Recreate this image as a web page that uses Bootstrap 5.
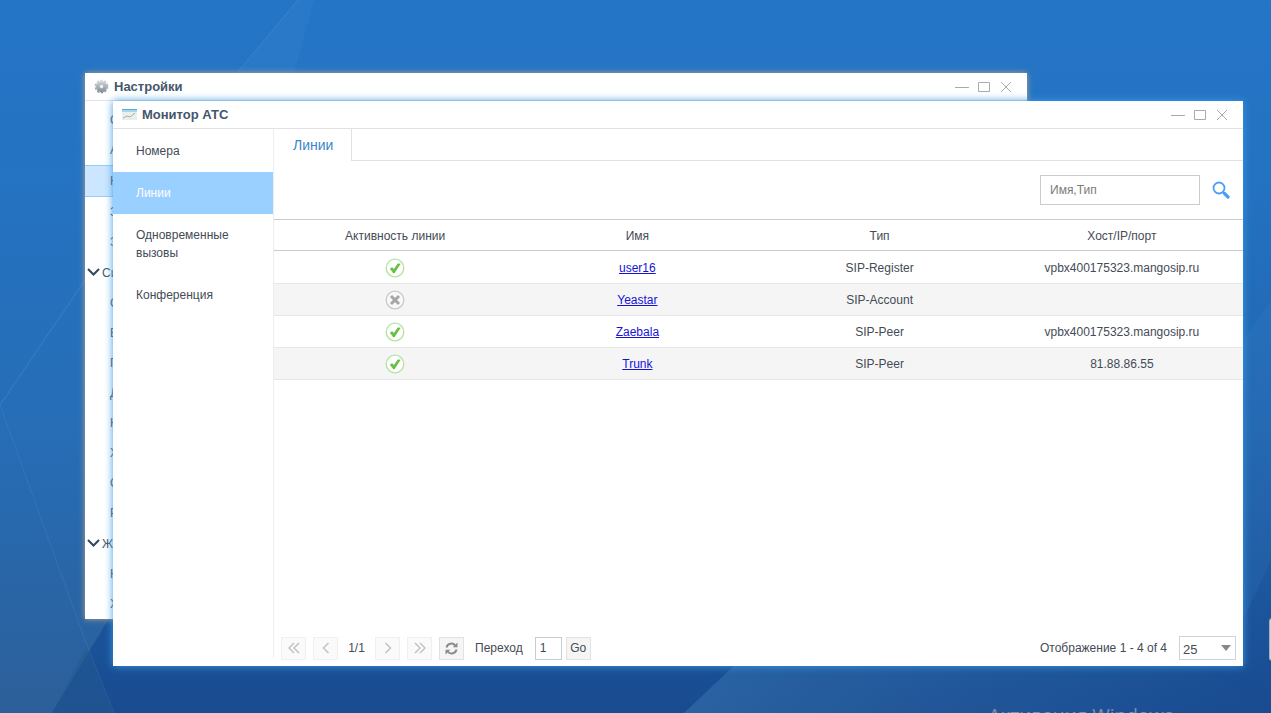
<!DOCTYPE html>
<html lang="ru">
<head>
<meta charset="utf-8">
<meta name="viewport" content="width=device-width, initial-scale=1">
<title>Монитор АТС</title>
<link href="https://cdn.jsdelivr.net/npm/bootstrap@5.3.0/dist/css/bootstrap.min.css" rel="stylesheet">
<style>
  body { font-family: "Liberation Sans", Arial, sans-serif; font-size: 12px; line-height: 18px; color: #444b55; }
  .desktop { background: linear-gradient(180deg, #2575c6 0%, #2472c2 25%, #2065b0 60%, #194b90 100%); }
  .wallpaper { z-index: 0; }
  .app-window { background: #fff; }
  .settings-window { inset: 73px 244px 94px 85px; z-index: 1; box-shadow: 0 0 6px #b3a58c; }
  .monitor-window { inset: 101px 28px 47px 113px; z-index: 2; box-shadow: 0 0 8px #3c9be4; }
  .title-bar { height: 28px; border-bottom: 1px solid #dfe3e6; padding: 0 10px 0 9px; color: #44566b; flex: none; }
  .title-bar h1 { font-size: 13px; line-height: 18px; font-weight: 700; }
  .title-bar > svg { margin-right: 5px; }
  .win-btn { width: 22px; height: 22px; background: none; border: 0; padding: 0; color: #aaa; }
  .win-btn svg, .pager svg, .status-icon, .search-btn svg { display: block; margin: auto; }

  .tree-list a { display: flex; align-items: center; height: 30px; padding-left: 25px; color: #44566b; text-decoration: none; }
  .tree-list a.chosen { height: 32px; background: #cce6ff; border: 1px solid #99cdf5; border-left: 0; }
  .tree-list a.group-head { height: 31px; padding-left: 2px; gap: 2px; }

  .side-menu { width: 161px; flex: none; border-right: 1px solid #eceef0; padding-top: 1px; }
  .side-menu a { padding: 12px 23px; color: #444b55; text-decoration: none; }
  .side-menu a.chosen { background: #99d0ff; color: #fff; }
  .tab-strip { border-bottom: 1px solid #dfe3e6; height: 32px; flex: none; }
  .tab-strip .nav-link { font-size: 14px; line-height: 18px; padding: 7px 18px 7px 19px; height: 32px; background: #fff; color: #3b86c8; border: 0; border-right: 1px solid #dfe3e6; border-radius: 0; }
  .search-row { height: 58px; padding: 0 13px 0 0; gap: 12px; flex: none; }
  .search-row .form-control { width: 160px; height: 30px; font-size: 12px; line-height: 18px; padding: 5px 9px; border: 1px solid #c8ccd0; border-radius: 0; }
  .search-row .form-control::placeholder { color: #7b7b7b; opacity: 1; }
  .search-btn { background: none; border: 0; padding: 0; width: 18px; height: 20px; }
  .lines-table { table-layout: fixed; text-align: center; color: #444b55; border-top: 1px solid #c9cbcd; }
  .lines-table th { font-weight: 400; height: 31px; padding: 1px 0 0; border-bottom: 1px solid #c9cbcd; vertical-align: middle; }
  .lines-table td { height: 32px; padding: 1px 0 0; border-bottom: 1px solid #e4e6e8; vertical-align: middle; }
  .lines-table tbody tr:nth-child(even) td { background: #f5f5f6; }
  .lines-table tbody tr:first-child td { height: 33px; }
  .lines-table a { color: #1414d8; }

  .pager { padding: 0 7px 6px 7px; }
  .page-nav { gap: 7px; }
  .page-count { width: 23px; text-align: center; }
  .goto-box { gap: 12px; margin-left: 11px; }
  .pager button { width: 25px; height: 23px; padding: 0; font-size: 12px; line-height: 18px; background: #f5f5f6; border: 1px solid #e2e2e4; color: #444b55; }
  .pager button:disabled { background: #fafafb; border-color: #f0f0f2; color: #c3c3c5; }
  .pager .page-box { width: 27px; height: 23px; padding: 0 4px; font-size: 12px; border: 1px solid #c8ccd0; border-radius: 0; color: #444b55; }
  .pager .form-select { width: 57px; height: 24px; padding: 3px 0 0 3px; font-size: 13px; line-height: 18px; border: 1px solid #d0d3d6; border-radius: 0; color: #444b55;
    background: #fff url("data:image/svg+xml,%3Csvg xmlns='http://www.w3.org/2000/svg' viewBox='0 0 10 6'%3E%3Cpath fill='%23888' d='M0 0h10L5 6z'/%3E%3C/svg%3E") no-repeat right 4px top 8px / 10px 6px; }
  .activation { right: 98px; bottom: -15px; font-family: "Open Sans", "Noto Sans", sans-serif; font-size: 19px; line-height: 26px; color: #8190ab; }
  .edge-handle { right: -6px; bottom: 52px; width: 8px; height: 43px; background: #d6d6d6; border: 1px solid #a9b0bb; border-radius: 3px; }
</style>
</head>
<body>
<div class="desktop position-relative vh-100 overflow-hidden">
  <svg class="wallpaper position-absolute w-100 h-100" viewBox="0 0 1271 713" preserveAspectRatio="none" aria-hidden="true">
    <defs>
      <linearGradient id="beam" x1="0" y1="0" x2="0" y2="1"><stop offset="0" stop-color="#4a9bd8" stop-opacity="0"/><stop offset=".5" stop-color="#4a9bd8" stop-opacity=".16"/><stop offset="1" stop-color="#5a8fb0" stop-opacity=".3"/></linearGradient>
      <linearGradient id="glow" x1="0" y1="0" x2="1" y2="0"><stop offset="0" stop-color="#3a78b4" stop-opacity=".5"/><stop offset="1" stop-color="#2f6ca8" stop-opacity="0"/></linearGradient>
    </defs>
    <path d="M0 150H180V500L52 713H0z" fill="url(#beam)"/>
    <path d="M298 0h16l-20 74h-58z" fill="#4a9be0" opacity=".13"/>
    <path d="M298 0L236 74M85 280L0 405" stroke="#5aa5e6" stroke-opacity=".3" fill="none"/>
    <path d="M0 405L85 640 114 713" stroke="#5a9ad0" stroke-opacity=".22" fill="none"/>
    <path d="M87 646L114 713H52z" fill="#245a90" opacity=".5"/>
    <path d="M740 660L684 713H1271L1190 660z" fill="url(#glow)"/>
    <path d="M1243 340L1271 300V560L1243 620z" fill="#4088cc" opacity=".15"/>
  </svg>

  <section class="app-window settings-window position-absolute d-flex flex-column" aria-label="Настройки">
    <header class="title-bar d-flex align-items-center">
      <svg width="15" height="15" viewBox="0 0 16 16" aria-hidden="true">
        <defs><linearGradient id="steel" x1="0" y1="0" x2="0" y2="1"><stop offset="0" stop-color="#d3d6da"/><stop offset="1" stop-color="#858c99"/></linearGradient></defs>
        <circle cx="8" cy="8" r="6" fill="url(#steel)"/>
        <circle cx="8" cy="8" r="6.6" fill="none" stroke="url(#steel)" stroke-width="1.4" stroke-dasharray="2.6 1.55"/>
        <circle cx="8" cy="8" r="1.8" fill="#f2f4f6"/>
      </svg>
      <h1 class="m-0 flex-grow-1">Настройки</h1>
      <button class="win-btn" aria-label="Свернуть"><svg width="14" height="14" fill="none" stroke="currentColor"><path d="M0 7.5h14"/></svg></button>
      <button class="win-btn" aria-label="Развернуть"><svg width="12" height="12" fill="none" stroke="currentColor"><path d="M.5 1.5h11v9H.5z"/></svg></button>
      <button class="win-btn" aria-label="Закрыть"><svg width="10" height="10" fill="none" stroke="currentColor"><path d="M0 0l10 10M10 0L0 10"/></svg></button>
    </header>
    <nav class="tree-list pt-1">
      <a href="#">О</a>
      <a href="#">А</a>
      <a href="#" class="chosen">Н</a>
      <a href="#">З</a>
      <a href="#">З</a>
      <a href="#" class="group-head"><svg width="13" height="9" viewBox="0 0 13 9" fill="none" stroke="#33485c" stroke-width="2"><path d="M1 1l5.5 5.5L12 1"/></svg>Си</a>
      <a href="#">О</a>
      <a href="#">Е</a>
      <a href="#">П</a>
      <a href="#">Д</a>
      <a href="#">Н</a>
      <a href="#">Х</a>
      <a href="#">О</a>
      <a href="#">Р</a>
      <a href="#" class="group-head"><svg width="13" height="9" viewBox="0 0 13 9" fill="none" stroke="#33485c" stroke-width="2"><path d="M1 1l5.5 5.5L12 1"/></svg>Ж</a>
      <a href="#">Н</a>
      <a href="#">Х</a>
    </nav>
  </section>

  <main class="app-window monitor-window position-absolute d-flex flex-column">
    <header class="title-bar d-flex align-items-center">
      <svg width="15" height="13" viewBox="0 0 15 13" aria-hidden="true">
        <path d="M0 1h15v11H0z" fill="#eceeee"/><path d="M0 1h15v3H0z" fill="#a5d6ee"/><path d="M0 1h15v1H0z" fill="#5badd4"/>
        <path d="M1 10l4-2 3 1 5-4" stroke="#8fbf9c" fill="none"/>
      </svg>
      <h1 class="m-0 flex-grow-1">Монитор АТС</h1>
      <button class="win-btn" aria-label="Свернуть"><svg width="14" height="14" fill="none" stroke="currentColor"><path d="M0 7.5h14"/></svg></button>
      <button class="win-btn" aria-label="Развернуть"><svg width="12" height="12" fill="none" stroke="currentColor"><path d="M.5 1.5h11v9H.5z"/></svg></button>
      <button class="win-btn" aria-label="Закрыть"><svg width="10" height="10" fill="none" stroke="currentColor"><path d="M0 0l10 10M10 0L0 10"/></svg></button>
    </header>
    <div class="d-flex flex-grow-1">
      <nav class="side-menu d-flex flex-column mb-2">
        <a href="#">Номера</a>
        <a href="#" class="chosen" aria-current="page">Линии</a>
        <a href="#">Одновременные вызовы</a>
        <a href="#">Конференция</a>
      </nav>
      <div class="d-flex flex-column flex-grow-1">
        <div class="tab-strip nav" role="tablist">
          <button class="nav-link" role="tab" aria-selected="true">Линии</button>
        </div>
        <form class="search-row d-flex align-items-center justify-content-end">
          <input type="text" class="form-control" placeholder="Имя,Тип" aria-label="Имя,Тип">
          <button type="button" class="search-btn" aria-label="Поиск">
            <svg width="18" height="18" viewBox="0 0 18 18" fill="none" stroke="#4a9ff5"><circle cx="7" cy="7" r="5.5" stroke-width="1.8"/><path d="M11 11l1.5 1.5" stroke-width="2"/><path d="M12.5 12.5l3.5 3.5" stroke-width="3.2" stroke-linecap="round"/></svg>
          </button>
        </form>
        <table class="lines-table w-100">
          <thead><tr><th>Активность линии</th><th>Имя</th><th>Тип</th><th>Хост/IP/порт</th></tr></thead>
          <tbody>
            <tr><td><svg class="status-icon" width="20" height="20" role="img" aria-label="Активна"><use href="#line-on"/></svg></td><td><a href="#">user16</a></td><td>SIP-Register</td><td>vpbx400175323.mangosip.ru</td></tr>
            <tr><td><svg class="status-icon" width="20" height="20" role="img" aria-label="Неактивна"><use href="#line-off"/></svg></td><td><a href="#">Yeastar</a></td><td>SIP-Account</td><td></td></tr>
            <tr><td><svg class="status-icon" width="20" height="20" role="img" aria-label="Активна"><use href="#line-on"/></svg></td><td><a href="#">Zaebala</a></td><td>SIP-Peer</td><td>vpbx400175323.mangosip.ru</td></tr>
            <tr><td><svg class="status-icon" width="20" height="20" role="img" aria-label="Активна"><use href="#line-on"/></svg></td><td><a href="#">Trunk</a></td><td>SIP-Peer</td><td>81.88.86.55</td></tr>
          </tbody>
        </table>
        <footer class="pager d-flex align-items-center mt-auto">
          <div class="page-nav d-flex align-items-center">
            <button disabled aria-label="Первая"><svg width="12" height="12" fill="none" stroke="currentColor" stroke-width="1.5"><path d="M6 1L1 6l5 5M11 1L6 6l5 5"/></svg></button>
            <button disabled aria-label="Назад"><svg width="12" height="12" fill="none" stroke="currentColor" stroke-width="1.5"><path d="M8.5 1l-5 5 5 5"/></svg></button>
            <span class="page-count">1/1</span>
            <button disabled aria-label="Вперёд"><svg width="12" height="12" fill="none" stroke="currentColor" stroke-width="1.5"><path d="M3.5 1l5 5-5 5"/></svg></button>
            <button disabled aria-label="Последняя"><svg width="12" height="12" fill="none" stroke="currentColor" stroke-width="1.5"><path d="M1 1l5 5-5 5M6 1l5 5-5 5"/></svg></button>
            <button aria-label="Обновить"><svg width="13" height="13" viewBox="0 0 13 13" fill="none" stroke="#8c8c8c" stroke-width="2"><path d="M1.5 5.5A5 5 0 0 1 10.3 3.5M11.5 7.5A5 5 0 0 1 2.7 9.5"/><path d="M12.5.5v4.8H7.7zM.5 12.5V7.7h4.8z" fill="#8c8c8c" stroke="none"/></svg></button>
          </div>
          <div class="goto-box d-flex align-items-center">
            <label for="goto">Переход</label>
            <div class="d-flex gap-1">
              <input id="goto" type="text" class="page-box" value="1">
              <button>Go</button>
            </div>
          </div>
          <label for="rows" class="ms-auto me-2 pe-1">Отображение 1 - 4 of 4</label>
          <select id="rows" class="form-select"><option>25</option><option>50</option></select>
        </footer>
      </div>
    </div>
  </main>

  <svg width="0" height="0" class="position-absolute" aria-hidden="true">
    <symbol id="line-on" viewBox="0 0 20 20"><circle cx="10" cy="10" r="8.8" fill="#fff" stroke="#b5e3a0" stroke-width="1.3"/><path d="M4.800 10.800l2.300-1.500 1.800 1.600 3.800-5.400 3 .3-6.200 9.400H8.300z" fill="#6abf47"/></symbol>
    <symbol id="line-off" viewBox="0 0 20 20"><circle cx="10" cy="10" r="8.8" fill="#f8f8f8" stroke="#c9c9c9" stroke-width="1.3"/><path d="M6 6l8 8M14 6l-8 8" stroke="#a6a6a6" stroke-width="3"/></symbol>
  </svg>
  <div class="edge-handle position-absolute"></div>
  <div class="activation position-absolute">Активация Windows</div>
</div>
<script src="https://cdn.jsdelivr.net/npm/bootstrap@5.3.0/dist/js/bootstrap.bundle.min.js"></script>
</body>
</html>
